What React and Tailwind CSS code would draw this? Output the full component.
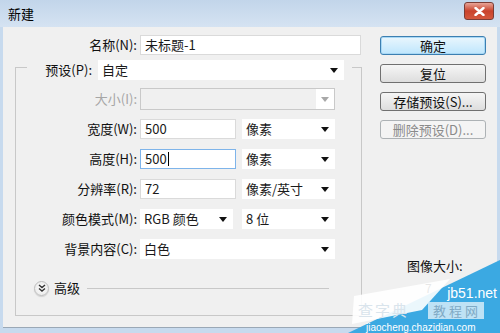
import React from 'react';

const font = "font-['Microsoft_YaHei','Noto_Sans_CJK_SC',sans-serif]";

function Arrow({ disabled }) {
    return (
        <svg width="8" height="5" viewBox="0 0 8 5" className="shrink-0">
            <path d="M0 0 H8 L4 5 Z" fill={disabled ? '#a8a8a8' : '#111'} />
        </svg>
    );
}

function Field({ value, width, focused, cursor }) {
    return (
        <div
            className={`h-[20px] ${width} bg-white border flex items-center pl-[4px] text-[13px] text-[#1a1a1a] ${focused ? 'border-[#7eb4ea]' : 'border-[#dadada]'}`}
        >
            {value}
            {cursor && <span className="w-px h-[14px] bg-black ml-px" />}
        </div>
    );
}

function Select({ value, width, disabled }) {
    if (disabled) {
        return (
            <div className={`h-[22px] ${width} border border-[#c9c9c9] bg-[#f0f0f0] flex justify-end`}>
                <div className="w-[18px] h-full bg-white flex items-center justify-center">
                    <Arrow disabled />
                </div>
            </div>
        );
    }
    return (
        <div className={`h-[20px] ${width} bg-white flex items-center justify-between pl-[4px] pr-[6px] text-[13px] text-[#1a1a1a]`}>
            <span>{value}</span>
            <Arrow />
        </div>
    );
}

function Row({ label, disabled, children }) {
    return (
        <div className="flex items-center h-[20px]">
            <div className={`w-[124px] text-right pr-[3px] text-[13px] ${disabled ? 'text-[#a6a6a6]' : 'text-[#111]'}`}>
                {label}
            </div>
            <div className="flex items-center gap-[6px]">{children}</div>
        </div>
    );
}

function Button({ children, focused, disabled }) {
    let look = 'border-[#707070] bg-[linear-gradient(#f6f6f6,#dddddd)] text-[#111]';
    if (focused) look = 'border-[#3c7fb1] bg-[linear-gradient(#eaf6fd,#bee6fd)] text-[#111] shadow-[inset_0_0_0_1px_#a8d8f5]';
    if (disabled) look = 'border-[#adb2b5] bg-[#f4f4f4] text-[#8a8a8a]';
    return (
        <div className={`w-[106px] h-[19px] rounded-[3px] border flex items-center justify-center text-[13px] ${look}`}>
            {children}
        </div>
    );
}

export default function App() {
    return (
        <div className={`w-[500px] h-[333px] overflow-hidden relative bg-[#c7daee] ${font}`}>
            {/* title bar */}
            <div className="h-[27px] flex items-center justify-between pl-[8px] pr-[6px] bg-[linear-gradient(#c2d5ea,#d5e3f2)]">
                <span className="text-[13px] text-black">新建</span>
                <div className="w-[30px] h-[18px] -mt-[5px] rounded-[3px] border border-[#7a3d36] bg-[linear-gradient(#e8a497,#c9432c_50%,#d4583d)] flex items-center justify-center">
                    <svg width="11" height="9" viewBox="0 0 11 9">
                        <path d="M1.5 1 L9.5 8 M9.5 1 L1.5 8" stroke="#fff" strokeWidth="2.4" strokeLinecap="round" />
                    </svg>
                </div>
            </div>

            {/* body */}
            <div className="h-[301px] mx-[3px] bg-[#f0f0f0] border-b border-[#9aa8b6] flex">
                {/* left column */}
                <div className="w-[367px] pt-[8px]">
                    <div className="flex items-center h-[20px]">
                        <div className="w-[137px] text-right pr-[3px] text-[13px] text-[#111]">名称(N):</div>
                        <Field value="未标题-1" width="w-[221px]" />
                    </div>

                    {/* group box */}
                    <div className="ml-[12px] mt-[12px] w-[347px] border border-[#c8c8c8] pb-[17px]">
                        <div className="-mt-[8px] ml-[11px] w-[325px] h-[20px] bg-[#f0f0f0] flex items-center">
                            <div className="w-[65px] text-right text-[13px] text-[#111]">预设(P):</div>
                            <div className="ml-[6px]">
                                <Select value="自定" width="w-[246px]" />
                            </div>
                        </div>
                        <div className="flex flex-col gap-[10px] mt-[9px]">
                            <Row label="大小(I):" disabled>
                                <Select disabled width="w-[195px]" />
                            </Row>
                            <Row label="宽度(W):">
                                <Field value="500" width="w-[96px]" />
                                <Select value="像素" width="w-[93px]" />
                            </Row>
                            <Row label="高度(H):">
                                <Field value="500" width="w-[96px]" focused cursor />
                                <Select value="像素" width="w-[93px]" />
                            </Row>
                            <Row label="分辨率(R):">
                                <Field value="72" width="w-[96px]" />
                                <Select value="像素/英寸" width="w-[93px]" />
                            </Row>
                            <Row label="颜色模式(M):">
                                <Select value="RGB 颜色" width="w-[93px]" />
                                <div className="ml-[3px]">
                                    <Select value="8 位" width="w-[93px]" />
                                </div>
                            </Row>
                            <Row label="背景内容(C):">
                                <Select value="白色" width="w-[195px]" />
                            </Row>
                        </div>
                        <div className="flex items-center h-[20px] mt-[19px] pl-[18px] pr-[32px]">
                            <div className="w-[15px] h-[15px] rounded-full border border-[#bdbdbd] bg-[radial-gradient(#ffffff,#e4e4e4)] flex items-center justify-center shadow-[0_1px_1px_#cfcfcf]">
                                <svg width="8" height="8" viewBox="0 0 8 8">
                                    <path d="M1 1 L4 3.5 L7 1 M1 4.5 L4 7 L7 4.5" stroke="#333" strokeWidth="1.4" fill="none" />
                                </svg>
                            </div>
                            <span className="ml-[5px] text-[13px] text-[#111]">高级</span>
                            <div className="flex-1 h-px bg-[#c8c8c8] ml-[7px]" />
                        </div>
                    </div>
                </div>

                {/* right column */}
                <div className="pt-[9px] pl-[10px] flex flex-col">
                    <div className="flex flex-col gap-[9px]">
                        <Button focused>确定</Button>
                        <Button>复位</Button>
                        <Button>存储预设(S)...</Button>
                        <Button disabled>删除预设(D)...</Button>
                    </div>
                    <div className="mt-[117px] pl-[27px] text-[13px] text-[#111]">图像大小:</div>
                    <div className="mt-[6px] pl-[45px] text-[12px] text-[#111] leading-none">7</div>
                </div>
            </div>

            {/* watermark */}
            <div className="absolute right-0 bottom-0 w-[170px] h-[103px]">
                <svg width="170" height="103" viewBox="0 0 170 103" className="absolute inset-0">
                    <polygon points="18,103 170,30 170,103" fill="#3ba9e2" />
                    <polygon points="24,66 120,49 92,80 22,94" fill="#ffffff" opacity="0.9" />
                    <rect x="98" y="72" width="56" height="17" fill="#d6ecf8" opacity="0.85" />
                </svg>
                <div className="absolute right-[3px] top-[56px] text-[14px] leading-none text-white font-['Liberation_Sans',sans-serif]">jb51.net</div>
                <div className="absolute left-[28px] top-[72px] text-[15px] leading-none text-[#d9e4ec] tracking-[2px]">查字典</div>
                <div className="absolute left-[103px] top-[74px] text-[13px] leading-none text-[#7fa9c4] tracking-[3px]">教程网</div>
                <div className="absolute left-[36px] bottom-0 text-[10px] leading-none text-white font-['Liberation_Sans',sans-serif]">jiaocheng.chazidian.com</div>
            </div>
        </div>
    );
}
